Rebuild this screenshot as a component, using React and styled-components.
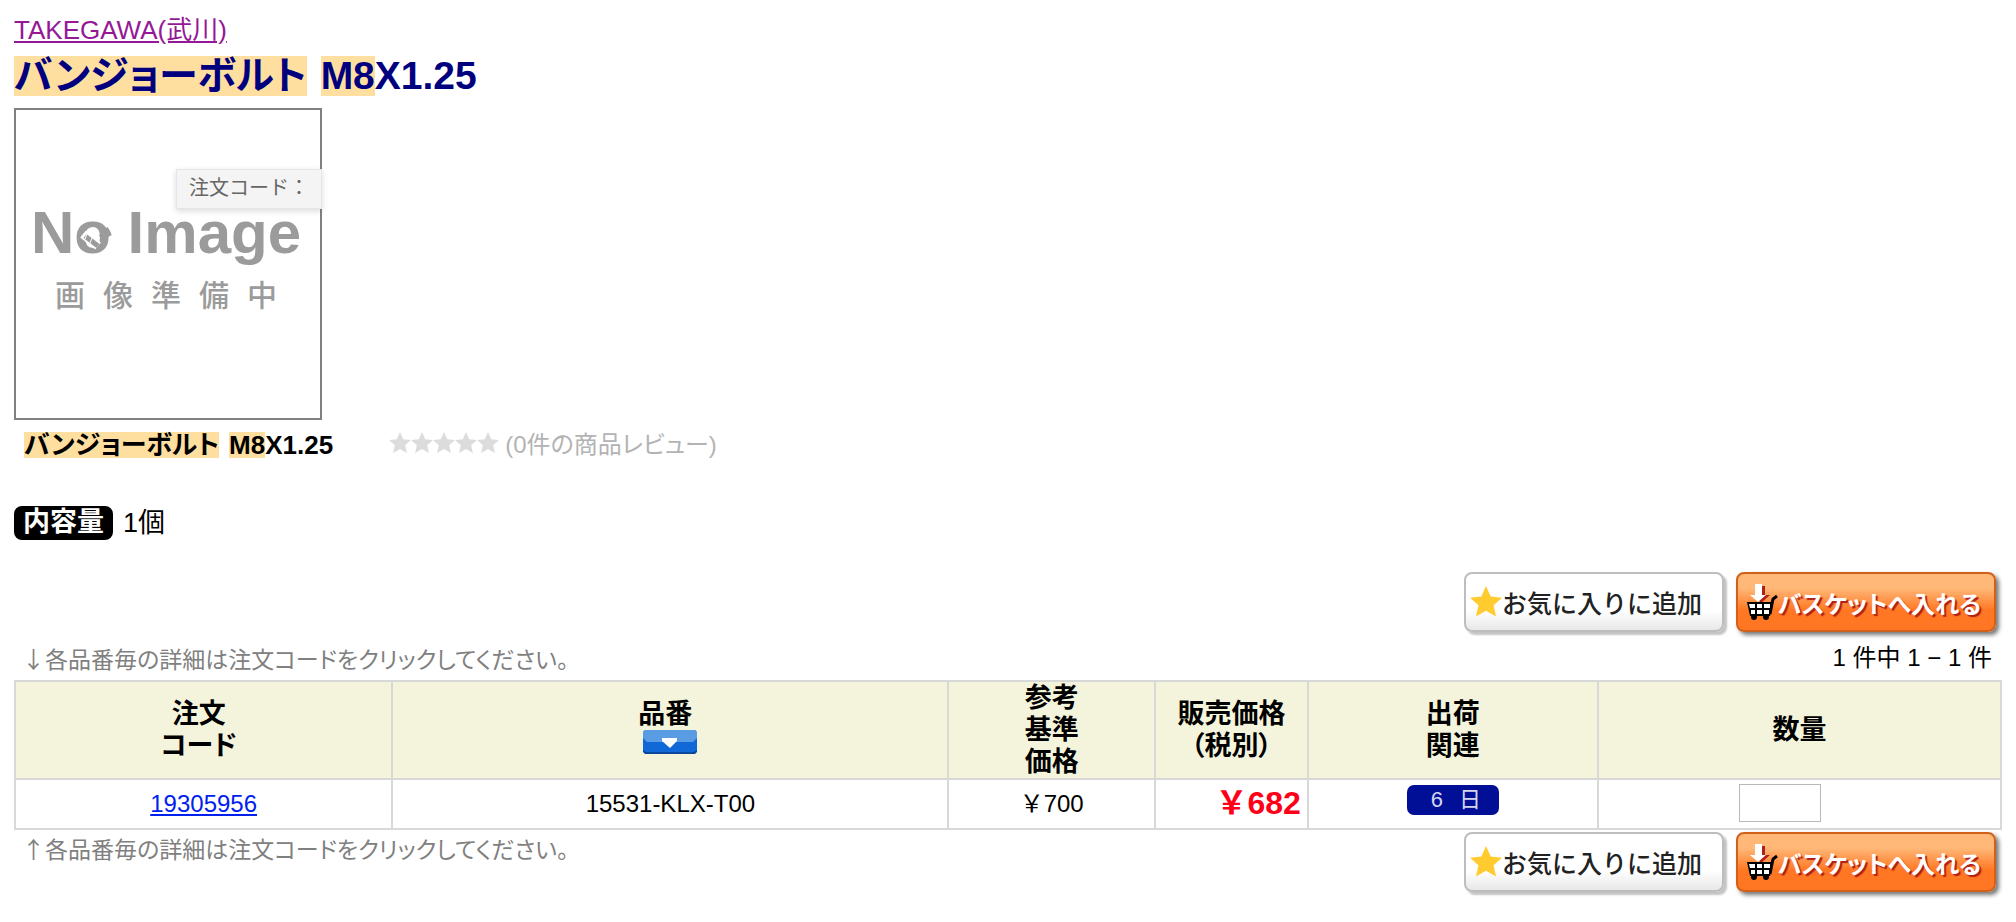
import React from 'react';
import styled, { createGlobalStyle } from 'styled-components';

const GlobalStyle = createGlobalStyle`
  * {
    box-sizing: border-box;
  }

  body {
    margin: 0;
    background: #fff;
    color: #000;
    font-family: 'Liberation Sans', 'Noto Sans CJK JP', sans-serif;
    font-feature-settings: 'palt';
    font-size: 24px;
    line-height: 32px;
  }
`;

const Page = styled.main`
  padding: 14px;
`;

const MakerLink = styled.a`
  display: block;
  width: fit-content;
  color: #951896;
  font-size: 26px;
`;

const Title = styled.h1`
  display: flex;
  margin: 10px 0 12px;
  color: #00007f;
  font-size: 39px;
  line-height: 40px;
`;

const Mark = styled.mark`
  background: #ffdfa0;
  color: inherit;
`;

const MarkedWord = styled(Mark)`
  margin-right: ${({ $large }) => ($large ? 14 : 10)}px;
`;

const Photo = styled.figure`
  position: relative;
  display: flex;
  flex-direction: column;
  align-items: center;
  width: 308px;
  height: 312px;
  margin: 0;
  padding-top: 90px;
  border: 2px solid #808080;
  color: #9b9b9b;
`;

const PhotoTitle = styled.span`
  position: relative;
  padding-right: 4px;
  font-size: 60px;
  font-weight: 700;
  line-height: 66px;
`;

const Plug = styled.svg`
  position: absolute;
  top: 20px;
  left: 42px;
  width: 44px;
  height: 40px;
`;

const PhotoText = styled.figcaption`
  display: flex;
  gap: 18px;
  margin-top: 14px;
  padding-right: 4px;
  font-size: 30px;
  font-weight: 500;
`;

const Tooltip = styled.div`
  position: absolute;
  top: 59px;
  right: -2px;
  padding: 2px 12px 4px;
  border: 1px solid #e6e6e6;
  background: #f4f4f4;
  color: #666;
  font-feature-settings: normal;
  font-size: 20px;
  box-shadow: 0 2px 6px rgba(0, 0, 0, 0.15);
`;

const Summary = styled.div`
  display: flex;
  align-items: center;
  margin: 9px 0 45px 10px;
`;

const ProductName = styled.strong`
  display: flex;
  font-size: 26px;
  line-height: 26px;
`;

const Stars = styled.svg`
  width: 110px;
  height: 22px;
  margin: 0 6px 4px 56px;
  fill: #dcdcdc;
`;

const Review = styled.span`
  color: #b3b3b3;
`;

const Content = styled.div`
  display: flex;
  align-items: center;
  gap: 10px;
  margin-bottom: 32px;
  font-size: 27px;
`;

const ContentLabel = styled.strong`
  padding: 0 9px 2px;
  border-radius: 8px;
  background: #000;
  color: #fff;
`;

const Bar = styled.div`
  display: flex;
  align-items: flex-start;
  justify-content: space-between;
  padding: ${({ $pad }) => $pad};
`;

const Actions = styled.div`
  display: flex;
  justify-content: flex-end;
  gap: 12px;
  margin-left: auto;
`;

const ActionButton = styled.button`
  display: flex;
  align-items: center;
  width: 260px;
  height: 60px;
  padding: 0 0 0 4px;
  border: 2px solid #bdbdbd;
  border-radius: 8px;
  background: linear-gradient(#fff 0, #fff 65%, #e8e8e8 100%);
  box-shadow: 3px 3px 2px #c4c4c4;
  color: #222;
  font-family: inherit;
  font-size: 25px;
  font-weight: 500;
  white-space: nowrap;
`;

const BasketButton = styled(ActionButton)`
  padding-left: 8px;
  border-color: #d0601a;
  background: linear-gradient(#ffb878 0, #ffb878 25%, #ff7722 65%);
  box-shadow: 3px 3px 4px #777;
  color: #fff;
  font-feature-settings: 'palt';
  font-size: 24px;
  font-weight: 700;
  text-shadow: 2px 2px 1px #b02018;
`;

const Note = styled.p`
  margin: 0;
  color: #808080;
  font-family: 'Noto Sans CJK JP', sans-serif;
  font-size: 23px;
`;

const Table = styled.table`
  width: 100%;
  border-collapse: collapse;
  table-layout: fixed;
`;

const Th = styled.th`
  width: ${({ $width }) => $width};
  height: 98px;
  padding: 0;
  border: 2px solid #d8d8d8;
  background: #f4f4dc;
  font-size: 27px;
`;

const HeadText = styled.span`
  display: block;
  padding-right: 10px;
`;

const Td = styled.td`
  height: 50px;
  padding: 0 ${({ $right }) => $right || 0}px 0 0;
  border: 2px solid #d8d8d8;
  font-feature-settings: normal;
  text-align: ${({ $align }) => $align || 'center'};
`;

const CodeLink = styled.a`
  color: #0020f0;
`;

const Price = styled.strong`
  color: #ff0018;
  font-size: 32px;
`;

const SortButton = styled.button`
  display: block;
  width: 54px;
  height: 24px;
  margin: 0 auto 8px;
  padding: 0;
  border: 0;
  background: none;
`;

const Days = styled.span`
  display: flex;
  gap: 16px;
  width: 92px;
  height: 30px;
  margin: 0 auto 8px;
  padding-left: 24px;
  border-radius: 7px;
  background: #000f96;
  color: #d4d6f0;
  font-size: 22px;
  line-height: 30px;
`;

const Quantity = styled.input`
  display: block;
  width: 82px;
  height: 38px;
  margin: 0 auto 2px;
  border: 1px solid #b8b8b8;
  background: #fff;
`;

const starPath = 'M11 0l3.2 7.2 7.8.8-5.8 5.2 1.7 7.8-6.9-4-6.9 4 1.7-7.8L0 8l7.8-.8z';

const FavoriteIcon = () => (
  <svg width="32" height="32" viewBox="0 0 22 22" fill="#ffcb2e" aria-hidden="true">
    <path d={starPath} />
  </svg>
);

const CartIcon = () => (
  <svg width="32" height="38" viewBox="0 0 32 38" aria-hidden="true">
    <path d="M11 3h8v9h5l-9 8-7-8h3z" fill="#b02018" />
    <path d="M1 19h26l-3 14H4z" fill="#000" />
    <path d="M31 13l-4 3-3 15" fill="none" stroke="#000" strokeWidth="3" />
    <path d="M3 21h6v4H4zM11 21h5v4h-5zM18 21h6v4h-6zM5 27h4v4H5zM11 27h5v4h-5zM18 27h5v4h-5z" fill="#fff" />
    <circle cx="8" cy="34" r="3" />
    <circle cx="20" cy="34" r="3" />
    <path d="M9 1h7v11h4l-8 7-8-7h5z" fill="#fff" />
  </svg>
);

const SortIcon = () => (
  <svg width="54" height="24" viewBox="0 0 54 24" aria-hidden="true">
    <path d="M2 0h50l2 2v19l-3 3H3l-3-3V2z" fill="#1169d8" />
    <path d="M2 0h50l2 2v6l-4 4H4L0 8V2z" fill="#5a9ce4" />
    <path d="M0 20l3 2h48l3-2v2l-2 2H2l-2-2z" fill="#08479c" />
    <path d="M19 8h15v3l-7 7-8-7z" fill="#fff" />
  </svg>
);

const RatingStars = () => (
  <Stars viewBox="0 0 110 22" role="img" aria-label="0">
    {[0, 1, 2, 3, 4].map(i => (
      <path key={i} d={starPath} transform={`translate(${i * 22} 0)`} />
    ))}
  </Stars>
);

const ProductLabel = ({ large }) => (
  <>
    <MarkedWord $large={large}>バンジョーボルト</MarkedWord>
    <Mark>M8</Mark>
    X1.25
  </>
);

const OrderActions = () => (
  <Actions>
    <ActionButton type="button">
      <FavoriteIcon />
      お気に入りに追加
    </ActionButton>
    <BasketButton type="button">
      <CartIcon />
      バスケットへ入れる
    </BasketButton>
  </Actions>
);

const App = () => (
  <>
    <GlobalStyle />
    <Page>
      <MakerLink href="#maker">TAKEGAWA(武川)</MakerLink>
      <Title>
        <ProductLabel large />
      </Title>
      <Photo>
        <PhotoTitle>
          No Image
          <Plug viewBox="0 0 44 40" aria-hidden="true">
            <path d="M10 14l15 12" stroke="#fff" strokeWidth="9" />
            <path d="M12 16l13 10" stroke="#9b9b9b" strokeWidth="5" />
            <path d="M14 14l-2 5M19 18l-2 5" stroke="#fff" strokeWidth="1" />
            <path d="M27 17l10-6M33 8l4 8" stroke="#9b9b9b" strokeWidth="4" />
          </Plug>
        </PhotoTitle>
        <PhotoText>
          {['画', '像', '準', '備', '中'].map(char => <span key={char}>{char}</span>)}
        </PhotoText>
        <Tooltip role="tooltip">注文コード：</Tooltip>
      </Photo>
      <Summary>
        <ProductName>
          <ProductLabel />
        </ProductName>
        <RatingStars />
        <Review>(0件の商品レビュー)</Review>
      </Summary>
      <Content>
        <ContentLabel>内容量</ContentLabel>
        1個
      </Content>
      <Bar $pad="0 6px 10px 0">
        <OrderActions />
      </Bar>
      <Bar $pad="0 10px 6px 8px">
        <Note>↓各品番毎の詳細は注文コードをクリックしてください。</Note>
        <span>1 件中 1 − 1 件</span>
      </Bar>
      <Table>
        <thead>
          <tr>
            <Th $width="19%"><HeadText>注文<br />コード</HeadText></Th>
            <Th $width="28%">
              <HeadText>品番</HeadText>
              <SortButton type="button" aria-label="品番">
                <SortIcon />
              </SortButton>
            </Th>
            <Th $width="10.4%">参考<br />基準<br />価格</Th>
            <Th $width="7.7%">販売価格<br />（税別）</Th>
            <Th $width="14.6%">出荷<br />関連</Th>
            <Th>数量</Th>
          </tr>
        </thead>
        <tbody>
          <tr>
            <Td><CodeLink href="#19305956">19305956</CodeLink></Td>
            <Td>15531-KLX-T00</Td>
            <Td>￥700</Td>
            <Td $align="right" $right={6}><Price>￥682</Price></Td>
            <Td>
              <Days>
                <span>6</span>
                <span>日</span>
              </Days>
            </Td>
            <Td $right={38}><Quantity type="text" aria-label="数量" /></Td>
          </tr>
        </tbody>
      </Table>
      <Bar $pad="2px 6px 0 8px">
        <Note>↑各品番毎の詳細は注文コードをクリックしてください。</Note>
        <OrderActions />
      </Bar>
    </Page>
  </>
);

export default App;
